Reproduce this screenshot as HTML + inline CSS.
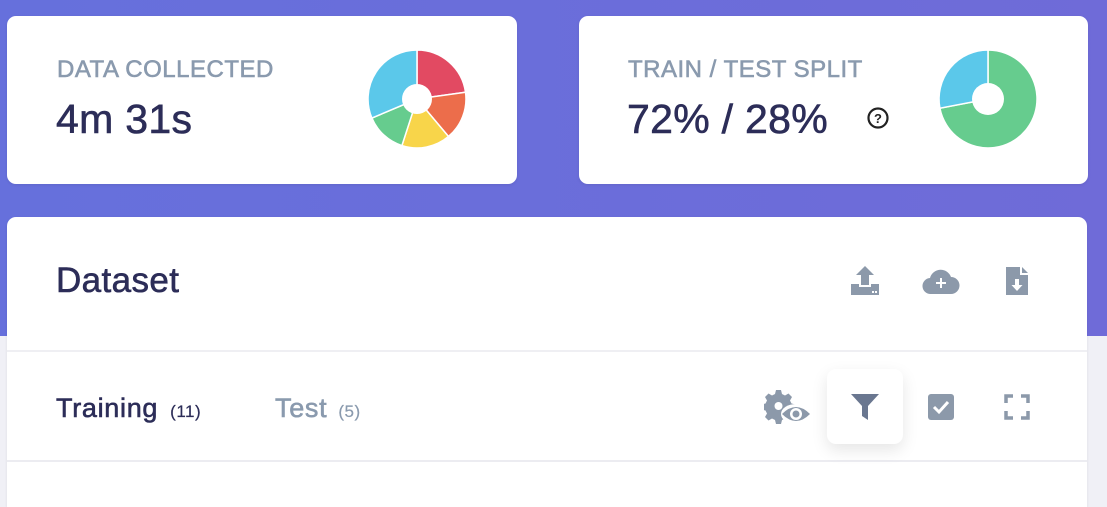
<!DOCTYPE html>
<html><head><meta charset="utf-8"><style>
*{margin:0;padding:0;box-sizing:border-box}
body{width:1107px;height:489px;overflow:hidden;background:#f0f0f6;font-family:"Liberation Sans",sans-serif;position:relative}
.bg{position:absolute;left:0;top:0;width:1107px;height:336px;background:linear-gradient(90deg,#6670dc,#6f6bd8)}
.card{position:absolute;background:#fff;border-radius:9px;box-shadow:0 1px 3px rgba(0,0,0,.08)}
.t{position:absolute;white-space:nowrap;-webkit-text-stroke:0.6px currentColor}
.lab{color:#8a9aae;font-size:24px;letter-spacing:0.5px}
.val{color:#2c2d58;font-size:41px;letter-spacing:0.3px}
.ic{position:absolute}
</style></head><body>
<div class="bg"></div>
<div class="card" style="left:7px;top:16px;width:510px;height:168px"></div>
<div class="card" style="left:579px;top:16px;width:509px;height:168px"></div>
<div class="card" style="left:7px;top:217px;width:1080px;height:290px;border-radius:9px 9px 0 0"></div>
<div style="position:absolute;left:7px;top:350px;width:1080px;height:2px;background:#efeff3"></div>
<div style="position:absolute;left:7px;top:460px;width:1080px;height:2px;background:#ececf1"></div>

<div class="t lab" style="left:57px;top:56px">DATA COLLECTED</div>
<div class="t val" style="left:56px;top:96px">4m 31s</div>
<div class="t lab" style="left:628px;top:56px">TRAIN / TEST SPLIT</div>
<div class="t val" style="left:627px;top:96px">72% / 28%</div>
<svg class="ic" style="left:866px;top:106px" width="24" height="24" viewBox="0 0 24 24"><circle cx="12" cy="12" r="9.5" fill="none" stroke="#222" stroke-width="2.2"/><text x="12" y="17" text-anchor="middle" font-family="Liberation Sans" font-weight="bold" font-size="13" fill="#222">?</text></svg>

<svg class="ic" style="left:366px;top:48px" width="102" height="102" viewBox="-51 -51 102 102">
<g stroke="#fff" stroke-width="1.5">
<path d="M0 0 L0 -49 A49 49 0 0 1 48.5 -6.8Z" fill="#e24a62"/>
<path d="M0 0 L48.5 -6.8 A49 49 0 0 1 31.5 37.5Z" fill="#ec6d4b"/>
<path d="M0 0 L31.5 37.5 A49 49 0 0 1 -15.1 46.6Z" fill="#f8d54a"/>
<path d="M0 0 L-15.1 46.6 A49 49 0 0 1 -45.1 19.1Z" fill="#66cc8e"/>
<path d="M0 0 L-45.1 19.1 A49 49 0 0 1 0 -49Z" fill="#5bc8ea"/>
</g><circle r="15" fill="#fff"/></svg>

<svg class="ic" style="left:937px;top:48px" width="102" height="102" viewBox="-51 -51 102 102">
<g stroke="#fff" stroke-width="1.5">
<path d="M0 0 L0 -49 A49 49 0 1 1 -48.1 9.2Z" fill="#66cc8e"/>
<path d="M0 0 L-48.1 9.2 A49 49 0 0 1 0 -49Z" fill="#5bc8ea"/>
</g><circle r="16" fill="#fff"/></svg>

<div class="t" style="left:56px;top:261px;font-size:35px;color:#2c2d58;letter-spacing:0.4px">Dataset</div>
<div class="t" style="left:56px;top:393px;font-size:27px;color:#2c2d58;letter-spacing:0.7px">Training<span style="font-size:17px;-webkit-text-stroke:0.2px;margin-left:12px;letter-spacing:0.5px">(11)</span></div>
<div class="t" style="left:275px;top:393px;font-size:27px;color:#8a9aae;letter-spacing:0.7px">Test<span style="font-size:17px;-webkit-text-stroke:0.2px;margin-left:11px;letter-spacing:0.5px">(5)</span></div>

<svg class="ic" style="left:849px;top:265px" width="32" height="32" viewBox="0 0 32 32" fill="#8c99aa">
<path d="M16 1 L25 10 H20 V20 H12 V10 H7Z"/><path d="M2 19 H10 V22 H22 V19 H30 V30 H2Z"/><rect x="23" y="26" width="2" height="2" fill="#fff"/><rect x="26" y="26" width="2" height="2" fill="#fff"/></svg>
<svg class="ic" style="left:922px;top:267px" width="38" height="28" viewBox="0 0 38 28" fill="#8c99aa">
<path d="M9 27 A8 8 0 0 1 8 11 A11 11 0 0 1 29 10 A8.5 8.5 0 0 1 29 27Z"/><path d="M18 11 h2 v4 h4 v2 h-4 v4 h-2 v-4 h-4 v-2 h4Z" fill="#fff"/></svg>
<svg class="ic" style="left:1005px;top:265px" width="24" height="32" viewBox="0 0 24 32" fill="#8c99aa">
<path d="M1 2 H15 V10 H23 V30 H1Z"/><path d="M17 2 L23 8 H17Z"/><path d="M10 14 h4 v6 h3.5 L12 26 L6.5 20 H10Z" fill="#fff"/></svg>

<svg class="ic" style="left:764px;top:389px" width="48" height="38" viewBox="0 0 48 38" fill="#8c99aa">
<path d="M12 1 h5 l1 4 l3 1.5 l3.5 -2 l3.5 3.5 l-2 3.5 l1.5 3 l4 1 v5 l-4 1 l-1.5 3 l2 3.5 l-3.5 3.5 l-3.5 -2 l-3 1.5 l-1 4 h-5 l-1 -4 l-3 -1.5 l-3.5 2 l-3.5 -3.5 l2 -3.5 l-1.5 -3 l-4 -1 v-5 l4 -1 l1.5 -3 l-2 -3.5 l3.5 -3.5 l3.5 2 l3 -1.5Z"/>
<circle cx="14.5" cy="17" r="4" fill="#fff"/>
<ellipse cx="32" cy="25" rx="15" ry="10" fill="#fff"/>
<path d="M18 25 Q32 11 46 25 Q32 39 18 25Z"/><circle cx="32" cy="25" r="6" fill="#fff"/><circle cx="32" cy="25" r="3.5"/></svg>
<div style="position:absolute;left:827px;top:369px;width:76px;height:75px;background:#fff;border-radius:9px;box-shadow:0 6px 16px rgba(0,0,0,.1)"></div>
<svg class="ic" style="left:850px;top:392px" width="30" height="30" viewBox="0 0 30 30" fill="#6a7790"><path d="M1 2 H29 L18 14 V28 L12 24 V14Z"/></svg>
<svg class="ic" style="left:928px;top:394px" width="26" height="26" viewBox="0 0 26 26"><rect x="0" y="0" width="26" height="26" rx="3" fill="#8c99aa"/><path d="M6 13 L11 18 L20 8" stroke="#fff" stroke-width="3" fill="none"/></svg>
<svg class="ic" style="left:1004px;top:394px" width="26" height="26" viewBox="0 0 26 26" fill="none" stroke="#8c99aa" stroke-width="3.5"><path d="M2 9 V2 H9 M17 2 H24 V9 M24 17 V24 H17 M9 24 H2 V17"/></svg>
</body></html>
